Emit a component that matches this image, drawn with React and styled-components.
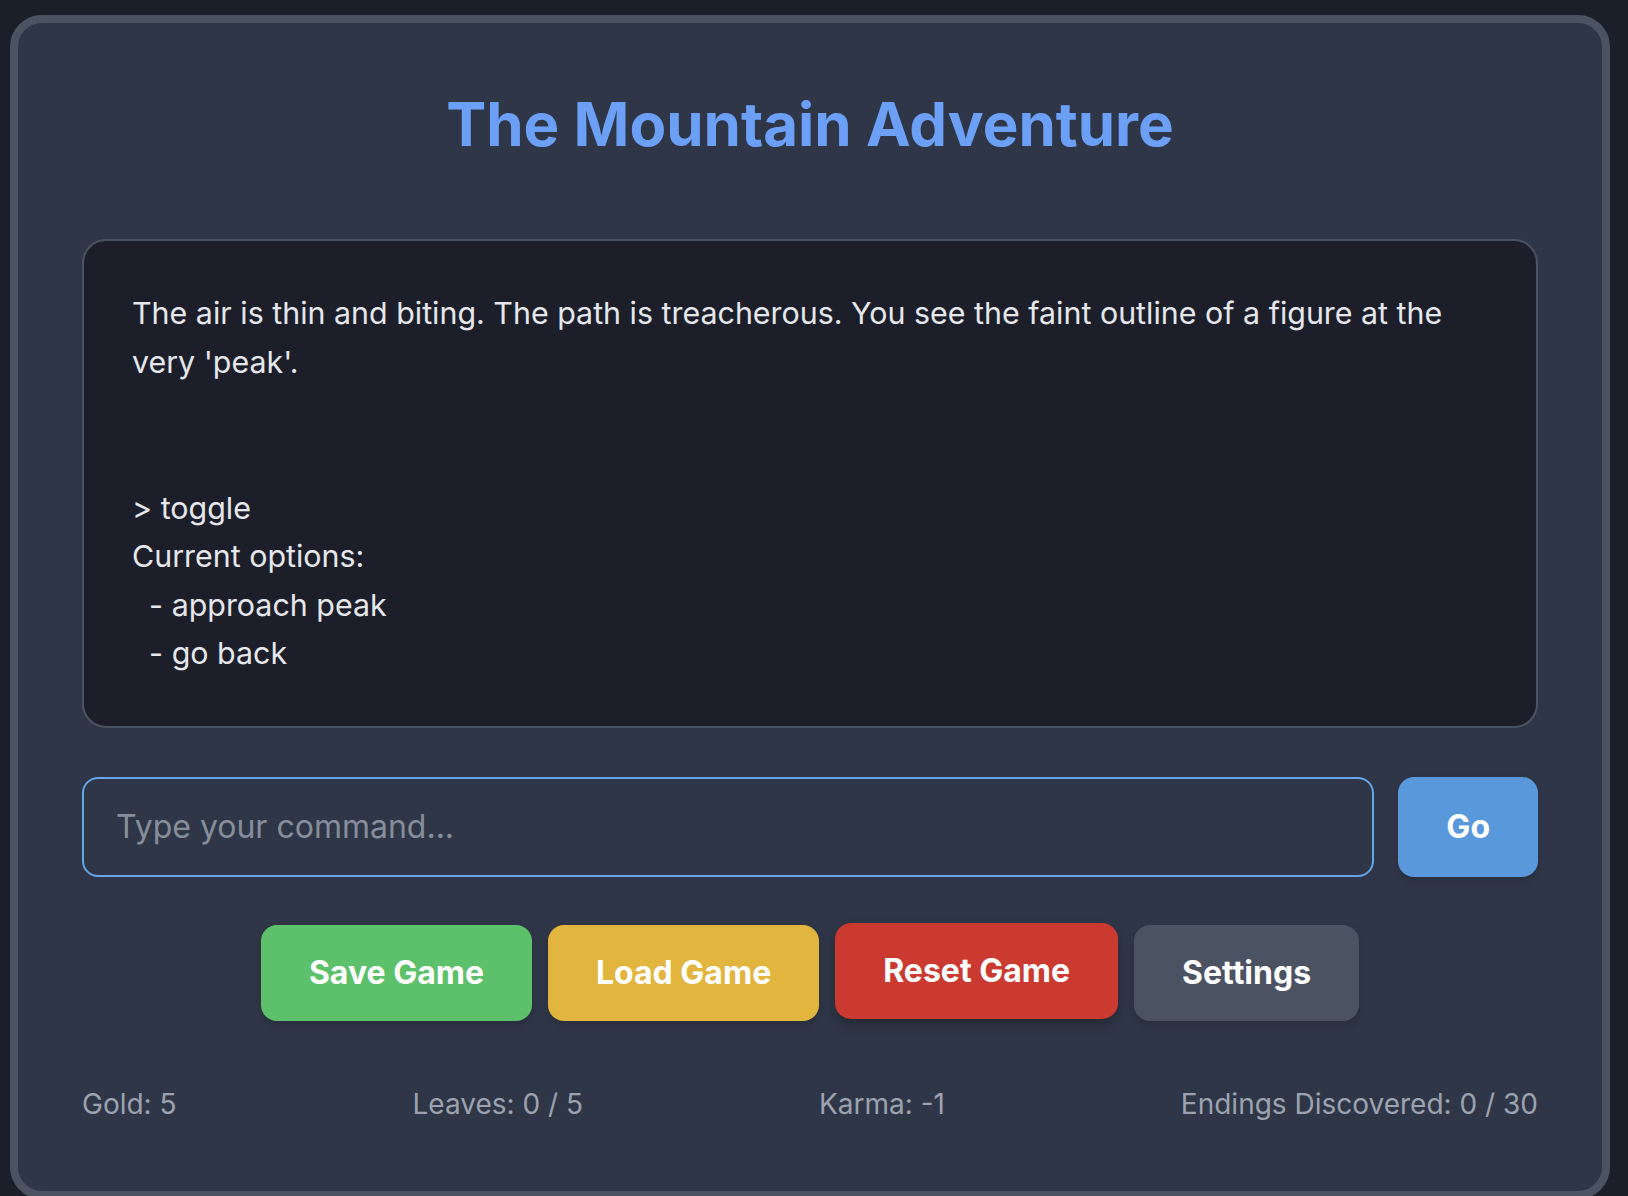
import React, { useState } from "react";
import styled, { createGlobalStyle } from "styled-components";

const GlobalStyle = createGlobalStyle`
  * {
    box-sizing: border-box;
  }
  body {
    margin: 0;
    background: #1b1f2a;
    font-family: Inter, "Noto Sans", sans-serif;
    line-height: 1.6;
    color: #e5e7eb;
  }
`;

const Page = styled.div`
  padding: 15px 0 0 10px;
`;

const Card = styled.main`
  width: 1600px;
  background: #2f3647;
  border: 8px solid #4b5363;
  border-radius: 32px;
  padding: 65px 64px 64px;
  display: flex;
  flex-direction: column;
`;

const Title = styled.h1`
  margin: 0 0 79px;
  text-align: center;
  font-size: 60px;
  line-height: 1.2;
  font-weight: 700;
  color: #6ca0f6;
`;

const Output = styled.div`
  background: #1c1f2a;
  border: 2px solid #4b5363;
  border-radius: 24px;
  padding: 48px;
  font-size: 30.4px;
  line-height: 1.6;
  color: #e5e7eb;
  white-space: pre-wrap;
`;

const CommandRow = styled.form`
  display: flex;
  gap: 24px;
  margin-top: 49px;
`;

const CommandInput = styled.input`
  flex: 1;
  background: #2f3647;
  border: 2px solid #64a6e8;
  border-radius: 16px;
  padding: 24px 32px;
  font-family: inherit;
  font-size: 32px;
  line-height: 48px;
  color: #e5e7eb;
  outline: none;
  &::placeholder {
    color: #878e9b;
  }
`;

const ActionButton = styled.button`
  border: none;
  border-radius: 16px;
  padding: 24px 48px;
  font-family: inherit;
  font-size: 32px;
  line-height: 1.5;
  font-weight: 700;
  color: #fff;
  background: ${(p) => p.$color};
  box-shadow: ${(p) =>
    p.$raised ? "0 6px 12px rgba(0, 0, 0, 0.25)" : "0 4px 8px rgba(0, 0, 0, 0.15)"};
  transform: ${(p) => (p.$raised ? "translateY(-2px)" : "none")};
  cursor: pointer;
`;

const ButtonRow = styled.div`
  display: flex;
  justify-content: center;
  gap: 16px;
  margin-top: 48px;
`;

const Stats = styled.div`
  display: flex;
  justify-content: space-between;
  margin-top: 61px;
  font-size: 28px;
  color: #9ca3af;
`;

const story = `The air is thin and biting. The path is treacherous. You see the faint outline of a figure at the very 'peak'.


> toggle
Current options:
  - approach peak
  - go back`;

export default function App() {
  const [command, setCommand] = useState("");

  return (
    <Page>
      <GlobalStyle />
      <Card>
        <Title>The Mountain Adventure</Title>
        <Output>{story}</Output>
        <CommandRow onSubmit={(e) => e.preventDefault()}>
          <CommandInput
            type="text"
            placeholder="Type your command..."
            value={command}
            onChange={(e) => setCommand(e.target.value)}
          />
          <ActionButton type="submit" $color="#5a98dc">
            Go
          </ActionButton>
        </CommandRow>
        <ButtonRow>
          <ActionButton type="button" $color="#5cc16a">
            Save Game
          </ActionButton>
          <ActionButton type="button" $color="#e2b53e">
            Load Game
          </ActionButton>
          <ActionButton type="button" $color="#cb3a31" $raised>
            Reset Game
          </ActionButton>
          <ActionButton type="button" $color="#4b5262">
            Settings
          </ActionButton>
        </ButtonRow>
        <Stats>
          <span>Gold: 5</span>
          <span>Leaves: 0 / 5</span>
          <span>Karma: -1</span>
          <span>Endings Discovered: 0 / 30</span>
        </Stats>
      </Card>
    </Page>
  );
}
